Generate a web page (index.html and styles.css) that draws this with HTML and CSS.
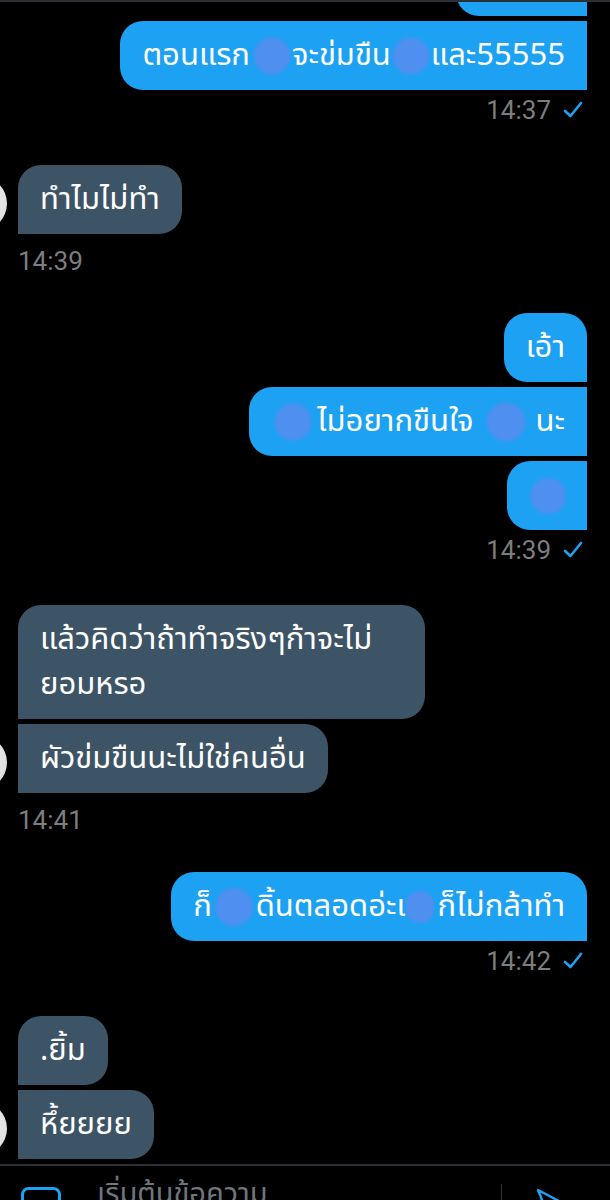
FILE: index.html
```html
<!DOCTYPE html>
<html lang="th">
  <head>
    <meta charset="UTF-8" />
    <meta name="viewport" content="width=device-width, initial-scale=1.0" />
    <title>Direct Messages</title>
    <link rel="stylesheet" href="styles.css">
  </head>
  <body>
    <div class="screen">
      <!-- conversation, scrolled so the first bubble is cut off -->
      <div class="thread">
        <div class="group sent first-group">
          <div class="bubble out scrolled"></div>
          <div class="bubble out mid">ตอนแรก<span class="blob b-one"></span>จะข่มขืน<span class="blob b-two"></span>และ55555</div>
          <div class="meta">14:37 <svg class="tick" viewBox="0 0 20 18"><path d="M2 10 L7.5 15 L18 2" /></svg></div>
        </div>

        <div class="group received">
          <div class="row">
            <div class="avatar"></div>
            <div class="stack">
              <div class="bubble in">ทำไมไม่ทำ</div>
            </div>
          </div>
          <div class="meta left">14:39</div>
        </div>

        <div class="group sent">
          <div class="bubble out top">เอ้า</div>
          <div class="bubble out mid"><span class="blob b-three"></span>ไม่อยากขืนใจ<span class="blob b-four"></span>นะ</div>
          <div class="bubble out mid"><span class="blob b-five"></span></div>
          <div class="meta">14:39 <svg class="tick" viewBox="0 0 20 18"><path d="M2 10 L7.5 15 L18 2" /></svg></div>
        </div>

        <div class="group received">
          <div class="row">
            <div class="avatar"></div>
            <div class="stack">
              <div class="bubble in wrap">แล้วคิดว่าถ้าทำจริงๆก้าจะไม่<br>ยอมหรอ</div>
              <div class="bubble in follow">ผัวข่มขืนนะไม่ใช่คนอื่น</div>
            </div>
          </div>
          <div class="meta left">14:41</div>
        </div>

        <div class="group sent">
          <div class="bubble out top">ก็<span class="blob b-six"></span>ดิ้นตลอดอ่ะเ<span class="blob b-seven"></span>ก็ไม่กล้าทำ</div>
          <div class="meta">14:42 <svg class="tick" viewBox="0 0 20 18"><path d="M2 10 L7.5 15 L18 2" /></svg></div>
        </div>

        <div class="group received">
          <div class="row">
            <div class="avatar"></div>
            <div class="stack">
              <div class="bubble in">.ยิ้ม</div>
              <div class="bubble in follow">หึ้ยยยย</div>
            </div>
          </div>
        </div>
      </div>

      <!-- message composer -->
      <div class="composer">
        <svg class="media" viewBox="0 0 40 30"><rect x="1.5" y="1.5" width="37" height="40" rx="6" /></svg>
        <div class="placeholder">เริ่มต้นข้อความ</div>
        <div class="divider"></div>
        <svg class="send" viewBox="0 0 28 28"><path d="M4 2 L25 13 L4 24 L8.5 13 Z" /></svg>
      </div>
    </div>
  </body>
</html>
```

FILE: styles.css
```css
* {
  box-sizing: border-box;
}
body {
  margin: 0;
  background-color: #000;
  font-family: "Noto Sans Thai", "Noto Sans", "DejaVu Sans", sans-serif;
  color: #fff;
}
.screen {
  width: 610px;
  height: 1200px;
  overflow: hidden;
  border-top: 2px solid #2c2f33;
  display: flex;
  flex-direction: column;
}
.thread {
  height: 1162px;
  flex-shrink: 0;
  overflow: hidden;
  padding: 0 23px 0 18px;
  display: flex;
  flex-direction: column;
}
.group {
  display: flex;
  flex-direction: column;
  gap: 5px;
  margin-top: 41px;
}
.received + .group {
  margin-top: 38px;
}
.first-group {
  margin-top: -55px;
}
.sent {
  align-items: flex-end;
}
.received {
  align-items: flex-start;
}

/* bubbles */
.bubble {
  font-size: 31px;
  line-height: 45px;
  padding: 12px 22px;
  border-radius: 23px;
  white-space: nowrap;
}
.out {
  background-color: #1da1f2;
  border-top-right-radius: 0;
  border-bottom-right-radius: 0;
}
.out.top {
  border-top-right-radius: 23px;
}
.scrolled {
  width: 131px;
  height: 69px;
}
.in {
  background-color: #3d5466;
  border-bottom-left-radius: 0;
}
.in.follow {
  border-top-left-radius: 0;
}
.in.wrap {
  width: 407px;
}

/* censor blobs over names */
.blob {
  display: inline-block;
  width: 40px;
  height: 42px;
  vertical-align: middle;
  border-radius: 50%;
  background: radial-gradient(circle, #4e8ff0 55%, rgba(78, 143, 240, 0) 72%);
}
.b-one {
  margin: 0 0 0 2px;
}
.b-two {
  margin: 0;
}
.b-three {
  margin: 0 4px 0 2px;
}
.b-four {
  margin: 0 8px 0 10px;
  width: 44px;
}
.b-five {
  margin: 0 -2px 0 0;
  width: 38px;
}
.b-six {
  margin: 0 1px;
  width: 42px;
}
.b-seven {
  margin: 0 4px 0 0;
  width: 28px;
}

/* received rows with the clipped avatar */
.row {
  display: flex;
  align-items: flex-end;
  gap: 11px;
  margin-left: -66px;
}
.stack {
  display: flex;
  flex-direction: column;
  align-items: flex-start;
  gap: 5px;
}
.avatar {
  width: 55px;
  height: 55px;
  flex-shrink: 0;
  margin-bottom: 3px;
  border-radius: 50%;
  background: radial-gradient(circle at 40% 40%, #f4f4f4, #d9d9d9);
}

/* timestamps */
.meta {
  display: flex;
  align-items: center;
  gap: 12px;
  font-family: Roboto, "Liberation Sans", sans-serif;
  font-size: 26px;
  line-height: 28px;
  color: #7d7d7d;
  margin-top: 1px;
  margin-right: 4px;
}
.meta.left {
  margin-top: 8px;
  margin-right: 0;
}
.tick {
  width: 20px;
  height: 18px;
  fill: none;
  stroke: #1da1f2;
  stroke-width: 2.6;
  stroke-linecap: round;
  stroke-linejoin: round;
}

/* composer */
.composer {
  flex: 1;
  border-top: 2px solid #2c2f33;
  display: flex;
  align-items: flex-start;
  padding: 0 0 0 21px;
}
.media {
  width: 40px;
  height: 30px;
  margin-top: 21px;
  fill: none;
  stroke: #1da1f2;
  stroke-width: 3;
}
.placeholder {
  margin-left: 36px;
  margin-top: 8px;
  font-size: 29px;
  line-height: 40px;
  color: #6e767d;
  width: 370px;
}
.divider {
  width: 1px;
  height: 40px;
  margin-top: 18px;
  margin-left: 34px;
  background-color: #2f3336;
}
.send {
  width: 28px;
  height: 28px;
  margin-top: 22px;
  margin-left: 32px;
  fill: none;
  stroke: #1da1f2;
  stroke-width: 2.4;
  stroke-linejoin: round;
}
```
